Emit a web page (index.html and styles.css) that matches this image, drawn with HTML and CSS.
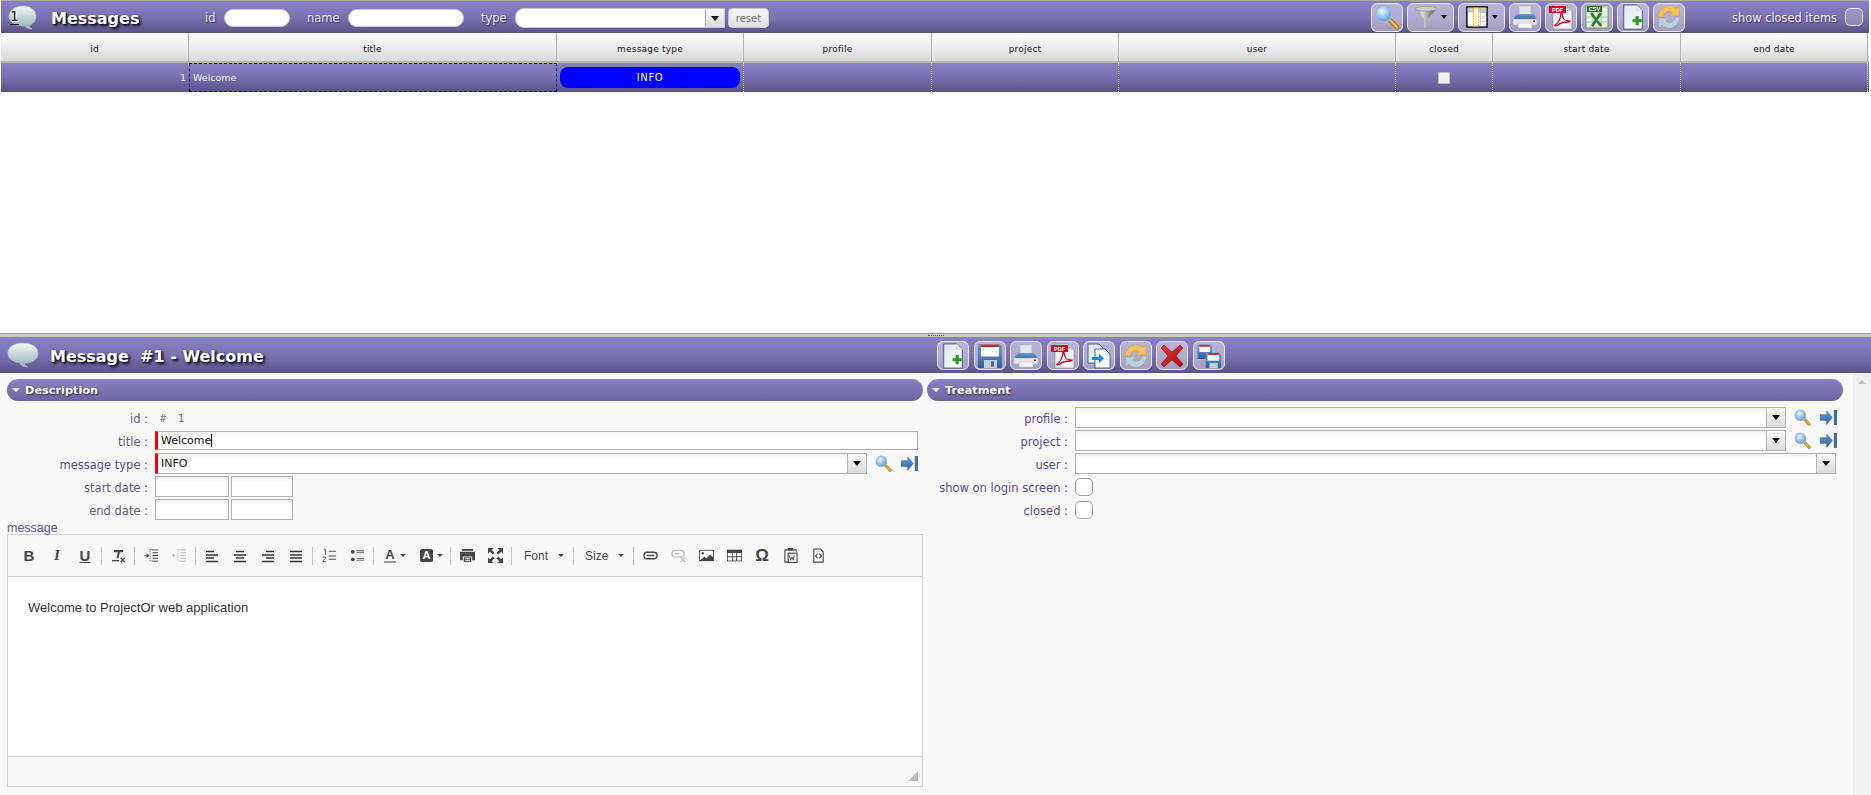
FILE: index.html
```html
<!DOCTYPE html>
<html lang="en">
<head>
    <meta charset="UTF-8">
    <title>Messages</title>
    <link rel="stylesheet" href="styles.css">
</head>
<body>
    <svg class="sprite" width="0" height="0">
        <defs>
            <linearGradient id="g-bubble" x1="0" y1="0" x2="0" y2="1"><stop offset="0" stop-color="#f4f8f8"/><stop offset="1" stop-color="#8fb0b4"/></linearGradient>
            <radialGradient id="g-lens" cx=".4" cy=".35" r=".7"><stop offset="0" stop-color="#eef7ff"/><stop offset="1" stop-color="#4b93e0"/></radialGradient>
            <linearGradient id="g-funnel" x1="0" y1="0" x2="1" y2="0"><stop offset="0" stop-color="#8c8c8c"/><stop offset=".35" stop-color="#d8d8d8"/><stop offset=".7" stop-color="#8a8a8a"/><stop offset="1" stop-color="#6f6f6f"/></linearGradient>
            <linearGradient id="g-page" x1="0" y1="0" x2="1" y2="1"><stop offset="0" stop-color="#dbe4f4"/><stop offset="1" stop-color="#ffffff"/></linearGradient>
            <linearGradient id="g-blue" x1="0" y1="0" x2="0" y2="1"><stop offset="0" stop-color="#6d9bd0"/><stop offset="1" stop-color="#2f5f9c"/></linearGradient>
            <linearGradient id="g-red" x1="0" y1="0" x2="1" y2="1"><stop offset="0" stop-color="#e23b3b"/><stop offset="1" stop-color="#a50f0f"/></linearGradient>

            <symbol id="i-bubble" viewBox="0 0 32 27">
                <path d="M16 1c8.500 0 15 3.700 15 10s-6 10-12 10c-1 0-1.500 0-2.300 0 .8 1.800 2.600 3.200 4.300 4-3.500 0-7-1.300-8.500-4.300C6.200 20 1 16.500 1 11 1 4.700 7.500 1 16 1z" fill="url(#g-bubble)" stroke="#b8cdd0" stroke-width=".6"/>
            </symbol>
            <symbol id="i-round-bubble" viewBox="0 0 29 25">
                <path d="M15 1c7 0 13 4 13 10 0 5-3.500 8.500-7 9.500.5 1.500 1.500 2.500 3 3.500-3 0-6-1-7.500-3C7 21 1 17 1 11 1 5 8 1 15 1z" fill="url(#g-bubble)" stroke="#b8cdd0" stroke-width=".6"/>
            </symbol>
            <symbol id="i-search" viewBox="0 0 24 24">
                <path d="M14.500 14.500l7 7" stroke="#a06a18" stroke-width="4" stroke-linecap="round"/>
                <path d="M14.500 14.500l7 7" stroke="#f0b040" stroke-width="2.400" stroke-linecap="round"/>
                <circle cx="9" cy="9" r="7.500" fill="url(#g-lens)" stroke="#9cb8d8" stroke-width="1.500"/>
            </symbol>
            <symbol id="i-funnel" viewBox="0 0 24 24">
                <path d="M0 3L10 14V24l4-2V14L24 3z" fill="url(#g-funnel)"/>
                <ellipse cx="12" cy="3" rx="12" ry="2.500" fill="#cfcfcf" stroke="#8a8a8a" stroke-width=".6"/>
            </symbol>
            <symbol id="i-columns" viewBox="0 0 24 24">
                <rect x="1" y="1" width="22" height="22" fill="#fff" stroke="#000" stroke-width="1.500"/>
                <rect x="2" y="2" width="20" height="5" fill="#c9c9c9"/>
                <path d="M16 2v20M16 7h6M16 12h6M16 17h6" stroke="#b0b0b0" stroke-width=".8"/>
                <rect x="8" y="2" width="6" height="20" fill="#fff4c8" stroke="#e09a10" stroke-width="1" stroke-dasharray="2 1"/>
            </symbol>
            <symbol id="i-print" viewBox="0 0 26 24">
                <rect x="7" y="1" width="12" height="9" fill="#dfe6ee" stroke="#a8b4c0" stroke-width=".6"/>
                <path d="M2 15c0-3 2-6 5-6h12c3 0 5 3 5 6z" fill="url(#g-blue)"/>
                <rect x="1" y="14" width="24" height="6" rx="1" fill="#e4e8ec" stroke="#a8b0b8" stroke-width=".6"/>
                <rect x="6" y="18" width="14" height="5" fill="#f8f9fb" stroke="#b0b8c0" stroke-width=".6"/>
                <rect x="21" y="15.500" width="2" height="1.500" fill="#c83030"/>
            </symbol>
            <symbol id="i-pdf" viewBox="0 0 26 26">
                <path d="M5 1h13l6 6v18H5z" fill="#f4f4f4" stroke="#8a8a8a" stroke-width=".7"/>
                <path d="M18 1v6h6z" fill="#cfcfcf"/>
                <rect x="1" y="2" width="17" height="7" fill="#c8102e"/>
                <text x="9.500" y="8" class="svg-tag">PDF</text>
                <path d="M7 21c3-1 6-7 6-12 0-1.500 1 -1 1 0 0 5 3 8 7 8 1.500 0 1.500 1 0 1-4 0-9 1-11 3-1.500 1.500-4 1-3 0z" fill="none" stroke="#c8102e" stroke-width="1.300"/>
            </symbol>
            <symbol id="i-csv" viewBox="0 0 26 26">
                <rect x="2" y="2" width="22" height="22" fill="#e8f2e0" stroke="#5f8a55" stroke-width=".8"/>
                <rect x="3" y="2" width="15" height="6" fill="#2f6e2f"/>
                <text x="10.500" y="7.200" class="svg-tag">CSV</text>
                <path d="M3 13h20M3 18h20M9 8v16M17 8v16" stroke="#8cb47e" stroke-width=".7"/>
                <path d="M7 9l10 13M17 9L8 22" stroke="#2f7d32" stroke-width="2.600"/>
            </symbol>
            <symbol id="i-new" viewBox="0 0 24 28">
                <path d="M2 1h14l6 6v20H2z" fill="url(#g-page)" stroke="#20355a" stroke-width=".8"/>
                <path d="M16 1v6h6z" fill="#eef2f8" stroke="#b8c4d8" stroke-width=".5"/>
                <path d="M16.500 13v10M11.500 18h10" stroke="#2c9a1e" stroke-width="3.400"/>
            </symbol>
            <symbol id="i-refresh" viewBox="0 0 28 28">
                <path d="M2 14C3 6 9 2 14 2c3 0 5.500 1 7.500 3L25 2v11H14l3.500-3.500C16.500 8.500 15 8 14 8c-3 0-6 2.500-6.500 6z" fill="#f2c25c" stroke="#d4993a" stroke-width=".6"/>
                <path d="M26 14c-1 8-7 12-12 12-3 0-5.500-1-7.500-3L3 26V15h11l-3.500 3.500c1 1 2.500 1.500 3.500 1.500 3 0 6-2.500 6.500-6z" fill="#bccfdb" stroke="#8da6b5" stroke-width=".6"/>
            </symbol>
            <symbol id="i-save" viewBox="0 0 26 26">
                <path d="M1 1h22l2 2v22H1z" fill="url(#g-blue)"/>
                <rect x="4" y="1.500" width="18" height="12" fill="#fff"/>
                <rect x="4" y="1.500" width="18" height="2.500" fill="#d02020"/>
                <rect x="7" y="17" width="13" height="8" fill="#c4cfdb"/>
                <rect x="14" y="18.500" width="3" height="5" fill="#48658a"/>
            </symbol>
            <symbol id="i-copy" viewBox="0 0 26 26">
                <path d="M2 1h11l4 4v15H2z" fill="url(#g-page)" stroke="#2c4a78" stroke-width=".8"/>
                <path d="M9 6h10l5 5v14H9z" fill="#f6f9fd" stroke="#2c4a78" stroke-width=".8"/>
                <path d="M6 14h7v-3l5 4.500-5 4.500v-3H6z" fill="#1f86d8"/>
            </symbol>
            <symbol id="i-delete" viewBox="0 0 26 26">
                <path d="M2 5l3-3 8 7 8-7 3 3-7 8 7 8-3 3-8-7-8 7-3-3 7-8z" fill="url(#g-red)" stroke="#8d1010" stroke-width=".5"/>
            </symbol>
            <symbol id="i-multi" viewBox="0 0 26 26">
                <g transform="translate(1 1) scale(.6)"><path d="M1 1h22l2 2v22H1z" fill="url(#g-blue)"/><rect x="4" y="1.500" width="18" height="12" fill="#fff"/><rect x="4" y="1.500" width="18" height="3" fill="#d02020"/></g>
                <g transform="translate(9 9) scale(.64)"><path d="M1 1h22l2 2v22H1z" fill="url(#g-blue)"/><rect x="4" y="1.500" width="18" height="12" fill="#fff"/><rect x="4" y="1.500" width="18" height="3" fill="#d02020"/><rect x="7" y="17" width="13" height="8" fill="#c4cfdb"/></g>
            </symbol>
            <symbol id="i-goto" viewBox="0 0 16 14">
                <path d="M0 4h6V0l6 7-6 7v-4H0z" fill="url(#g-blue)"/>
                <rect x="13" y="0" width="3" height="14" fill="#3d6ea8"/>
            </symbol>

            <symbol id="t-clear" viewBox="0 0 16 16"><path d="M3 2h10v2.500H9.500L8 11H5.800L7.300 4.500H3z" fill="#474747"/><path d="M1 13.500h8" stroke="#474747" stroke-width="1.500"/><path d="M10.500 10.500l4 4.500M14.500 10.500l-4 4.500" stroke="#474747" stroke-width="1.500"/></symbol>
            <symbol id="t-indent" viewBox="0 0 16 16"><path d="M8 2h7M9 5h6M9 8h6M9 11h6M8 14h7" stroke="#474747"/><path d="M6.500 1v14" stroke="#474747" stroke-dasharray="1 1"/><path d="M0 8h3V6l2.500 2L3 10V8" fill="#474747" stroke="#474747" stroke-width=".6"/></symbol>
            <symbol id="t-outdent" viewBox="0 0 16 16"><path d="M8 2h7M9 5h6M9 8h6M9 11h6M8 14h7" stroke="#bdbdbd"/><path d="M6.500 1v14" stroke="#bdbdbd" stroke-dasharray="1 1"/><path d="M5 8H2V6L0 8l2 2V8" fill="#bdbdbd" stroke="#bdbdbd" stroke-width=".6"/></symbol>
            <symbol id="t-left" viewBox="0 0 14 14"><path d="M1 2.500h8M1 6h12M1 9h8M1 12.500h12" stroke="#333" stroke-width="1.700"/></symbol>
            <symbol id="t-center" viewBox="0 0 14 14"><path d="M3 2.500h8M1 6h12M3 9h8M1 12.500h12" stroke="#333" stroke-width="1.700"/></symbol>
            <symbol id="t-right" viewBox="0 0 14 14"><path d="M5 2.500h8M1 6h12M5 9h8M1 12.500h12" stroke="#333" stroke-width="1.700"/></symbol>
            <symbol id="t-justify" viewBox="0 0 14 14"><path d="M1 2.500h12M1 6h12M1 9h12M1 12.500h12" stroke="#333" stroke-width="1.700"/></symbol>
            <symbol id="t-ol" viewBox="0 0 16 16"><path d="M7 3.500h8M7 8.500h8M7 12h8" stroke="#474747"/><path d="M2 1.500h1.500V7M1 14.500c0-2 3-2.500 3-4 0-1.500-2.500-1.500-3 0M1 14.500h3.200" fill="none" stroke="#474747"/></symbol>
            <symbol id="t-ul" viewBox="0 0 16 16"><circle cx="3" cy="4" r="2" fill="#474747"/><circle cx="3" cy="12" r="2" fill="#474747"/><path d="M7 3h8M7 5h8M7 11h8M7 13h8" stroke="#474747" stroke-width=".9"/></symbol>
            <symbol id="t-print" viewBox="0 0 16 16"><path d="M2 1h12v2H2z" fill="#474747"/><path d="M0 4h16v9h-3V9H3v4H0z" fill="#474747"/><path d="M4 10h8v5H4z" fill="#474747"/><path d="M5.500 11.500h5M5.500 13.500h5" stroke="#f8f8f8"/></symbol>
            <symbol id="t-max" viewBox="0 0 16 16"><path d="M0 0h6L4 2l3 3-2 2-3-3-2 2zM16 0v6l-2-2-3 3-2-2 3-3-2-2zM0 16v-6l2 2 3-3 2 2-3 3 2 2zM16 16h-6l2-2-3-3 2-2 3 3 2-2z" fill="#474747"/></symbol>
            <symbol id="t-link" viewBox="0 0 16 16"><rect x="1" y="4.500" width="14" height="7" rx="3.500" fill="none" stroke="#474747" stroke-width="1.500"/><path d="M4 8h8" stroke="#474747" stroke-width="1.500"/></symbol>
            <symbol id="t-unlink" viewBox="0 0 16 16"><rect x="1" y="2.500" width="13" height="7" rx="3.500" fill="none" stroke="#c4c4c4" stroke-width="1.500"/><path d="M4 6h5" stroke="#c4c4c4" stroke-width="1.500"/><path d="M10 10l5 5M15 10l-5 5" stroke="#c4c4c4" stroke-width="1.500"/></symbol>
            <symbol id="t-image" viewBox="0 0 16 16"><path d="M0 2h16v12H0z" fill="#474747"/><path d="M1 3h14v7l-3-3-4 4-2-2-5 4z" fill="#fff"/><circle cx="4" cy="5.500" r="1.300" fill="#474747"/></symbol>
            <symbol id="t-table" viewBox="0 0 18 16"><path d="M0 1h18v14H0z" fill="#474747"/><path d="M1 5h5v4H1zM7 5h4v4H7zM12 5h5v4h-5zM1 10h5v4H1zM7 10h4v4H7zM12 10h5v4h-5z" fill="#fff"/></symbol>
            <symbol id="t-paste" viewBox="0 0 16 16"><path d="M5 2H2v13h3M11 2h3v2" fill="none" stroke="#474747" stroke-width="1.200"/><rect x="5" y="0" width="6" height="3" fill="#474747"/><rect x="5.500" y="5.500" width="9.500" height="10" fill="none" stroke="#474747" stroke-width="1.200"/><path d="M7 8l1 5 1.500-3 1.500 3 1-5" fill="none" stroke="#474747"/></symbol>
            <symbol id="t-source" viewBox="0 0 16 16"><path d="M3 1h7l3 3v11H3z" fill="none" stroke="#474747" stroke-width="1.200"/><path d="M7 6L5 8.500 7 11M9 6l2 2.500L9 11" fill="none" stroke="#474747" stroke-width="1.200"/></symbol>
        </defs>
    </svg>

    <section class="list-panel">
        <header class="title-bar list-bar">
            <span class="bubble-wrap">
                <svg class="round-bubble"><use href="#i-round-bubble"/></svg>
                <span class="bubble-count">1</span>
            </span>
            <h1 class="page-title list-title">Messages</h1>
            <label class="filter-label filter-id">id</label>
            <span class="round-input w-id"></span>
            <label class="filter-label filter-name">name</label>
            <span class="round-input w-name"></span>
            <label class="filter-label filter-type">type</label>
            <span class="round-select"><span class="drop-btn"><i class="caret"></i></span></span>
            <button class="reset-btn">reset</button>
            <div class="list-tools">
                <button class="tool-btn"><svg><use href="#i-search"/></svg></button>
                <button class="tool-btn wide"><svg><use href="#i-funnel"/></svg><i class="caret"></i></button>
                <button class="tool-btn wide"><svg><use href="#i-columns"/></svg><i class="caret"></i></button>
                <button class="tool-btn"><svg><use href="#i-print"/></svg></button>
                <button class="tool-btn"><svg><use href="#i-pdf"/></svg></button>
                <button class="tool-btn"><svg><use href="#i-csv"/></svg></button>
                <button class="tool-btn"><svg><use href="#i-new"/></svg></button>
                <button class="tool-btn"><svg><use href="#i-refresh"/></svg></button>
            </div>
            <span class="show-closed">show closed items</span>
            <span class="check-box on-bar"></span>
        </header>

        <div class="grid-row grid-head">
            <div>id</div><div>title</div><div>message type</div><div>profile</div><div>project</div><div>user</div><div>closed</div><div>start date</div><div>end date</div>
        </div>
        <div class="grid-row grid-item">
            <div class="cell-id">1</div>
            <div class="cell-title">Welcome</div>
            <div class="cell-pill"><span class="pill">INFO</span></div>
            <div></div><div></div><div></div>
            <div class="cell-check"><span class="mini-check"></span></div>
            <div></div><div></div>
        </div>
    </section>

    <div class="splitter"><span class="grip"></span></div>

    <section class="detail-panel">
        <header class="title-bar detail-bar">
            <svg class="bubble-icon detail-bubble"><use href="#i-bubble"/></svg>
            <h2 class="page-title">Message&nbsp; #1 - Welcome</h2>
            <div class="detail-tools">
                <button class="tool-btn"><svg><use href="#i-new"/></svg></button>
                <button class="tool-btn"><svg><use href="#i-save"/></svg></button>
                <button class="tool-btn"><svg><use href="#i-print"/></svg></button>
                <button class="tool-btn"><svg><use href="#i-pdf"/></svg></button>
                <button class="tool-btn"><svg><use href="#i-copy"/></svg></button>
                <button class="tool-btn"><svg><use href="#i-refresh"/></svg></button>
                <button class="tool-btn"><svg><use href="#i-delete"/></svg></button>
                <button class="tool-btn"><svg><use href="#i-multi"/></svg></button>
            </div>
        </header>

        <div class="detail-body">
            <div class="form-area">
                <div class="form-col left-col">
                    <div class="section-bar"><i class="section-arrow"></i>Description</div>
                    <div class="form-rows">
                        <div class="form-row"><span class="field-label">id :</span><span class="id-value"><span class="hash">#</span>&nbsp; 1</span></div>
                        <div class="form-row"><span class="field-label">title :</span><span class="text-input required title-input">Welcome<i class="text-cursor"></i></span></div>
                        <div class="form-row"><span class="field-label link-label">message type :</span><span class="text-input required select-input type-select">INFO<span class="drop-btn"><i class="caret"></i></span></span>
                            <svg class="row-icon search-icon"><use href="#i-search"/></svg><svg class="row-icon goto-icon"><use href="#i-goto"/></svg></div>
                        <div class="form-row"><span class="field-label">start date :</span><span class="text-input date-input"></span><span class="text-input time-input"></span></div>
                        <div class="form-row"><span class="field-label">end date :</span><span class="text-input date-input"></span><span class="text-input time-input"></span></div>
                    </div>
                    <div class="message-label">message</div>
                    <div class="editor">
                        <div class="editor-toolbar">
                            <span class="tb-btn tb-bold">B</span>
                            <span class="tb-btn tb-italic">I</span>
                            <span class="tb-btn tb-under">U</span>
                            <i class="tb-sep"></i>
                            <span class="tb-btn"><svg><use href="#t-clear"/></svg></span>
                            <i class="tb-sep"></i>
                            <span class="tb-btn"><svg><use href="#t-indent"/></svg></span>
                            <span class="tb-btn"><svg><use href="#t-outdent"/></svg></span>
                            <i class="tb-sep"></i>
                            <span class="tb-btn"><svg class="tb-align"><use href="#t-left"/></svg></span>
                            <span class="tb-btn"><svg class="tb-align"><use href="#t-center"/></svg></span>
                            <span class="tb-btn"><svg class="tb-align"><use href="#t-right"/></svg></span>
                            <span class="tb-btn"><svg class="tb-align"><use href="#t-justify"/></svg></span>
                            <i class="tb-sep"></i>
                            <span class="tb-btn"><svg><use href="#t-ol"/></svg></span>
                            <span class="tb-btn"><svg><use href="#t-ul"/></svg></span>
                            <i class="tb-sep"></i>
                            <span class="tb-color"><span class="color-a">A</span><i class="tb-caret"></i></span>
                            <span class="tb-color"><span class="color-bg">A</span><i class="tb-caret"></i></span>
                            <i class="tb-sep"></i>
                            <span class="tb-btn"><svg><use href="#t-print"/></svg></span>
                            <span class="tb-btn"><svg><use href="#t-max"/></svg></span>
                            <i class="tb-sep"></i>
                            <span class="tb-combo font-combo">Font<i class="tb-caret"></i></span>
                            <i class="tb-sep"></i>
                            <span class="tb-combo size-combo">Size<i class="tb-caret"></i></span>
                            <i class="tb-sep"></i>
                            <span class="tb-btn"><svg><use href="#t-link"/></svg></span>
                            <span class="tb-btn"><svg><use href="#t-unlink"/></svg></span>
                            <span class="tb-btn"><svg><use href="#t-image"/></svg></span>
                            <span class="tb-btn"><svg><use href="#t-table"/></svg></span>
                            <span class="tb-btn tb-omega">Ω</span>
                            <span class="tb-btn"><svg><use href="#t-paste"/></svg></span>
                            <span class="tb-btn"><svg><use href="#t-source"/></svg></span>
                        </div>
                        <div class="editor-content">Welcome to ProjectOr web application</div>
                        <div class="editor-foot"><i class="resize-grip"></i></div>
                    </div>
                </div>

                <div class="form-col right-col">
                    <div class="section-bar"><i class="section-arrow"></i>Treatment</div>
                    <div class="form-rows">
                        <div class="form-row"><span class="field-label link-label">profile :</span><span class="text-input select-input link-select"><span class="drop-btn"><i class="caret"></i></span></span>
                            <svg class="row-icon search-icon"><use href="#i-search"/></svg><svg class="row-icon goto-icon"><use href="#i-goto"/></svg></div>
                        <div class="form-row"><span class="field-label link-label">project :</span><span class="text-input select-input link-select"><span class="drop-btn"><i class="caret"></i></span></span>
                            <svg class="row-icon search-icon"><use href="#i-search"/></svg><svg class="row-icon goto-icon"><use href="#i-goto"/></svg></div>
                        <div class="form-row"><span class="field-label link-label">user :</span><span class="text-input select-input user-select"><span class="drop-btn"><i class="caret"></i></span></span></div>
                        <div class="form-row"><span class="field-label link-label">show on login screen :</span><span class="check-box"></span></div>
                        <div class="form-row"><span class="field-label link-label">closed :</span><span class="check-box"></span></div>
                    </div>
                </div>
            </div>
            <div class="scroll-track"><i class="scroll-up"></i></div>
        </div>
    </section>
</body>
</html>
```

FILE: styles.css
```css
/* page */
html, body { height: 100%; }
body { margin: 0; height: 795px; overflow: hidden; display: flex; flex-direction: column; background: #fff; font-family: "DejaVu Sans", Verdana, sans-serif; font-size: 10px; color: #333; }
.sprite { position: absolute; }
button { padding: 0; font-family: inherit; }
h1, h2 { margin: 0; font-weight: bold; }

/* title bars */
.title-bar { display: flex; align-items: center; background: linear-gradient(#8a80c6, #7870b0 55%, #5a5385); color: #fff; }
.page-title { font-size: 16px; color: #fff; text-shadow: 2px 2px 3px #0e0c22, 1px 1px 2px #1d1a38; white-space: nowrap; margin-top: 2px; }
.bubble-icon { width: 32px; height: 27px; }

.list-panel { height: 333px; flex: none; padding: 0 2px 0 1px; box-sizing: border-box; background: #fff; }
.list-bar { height: 32px; border-top: 1px solid #a9a9a9; }
.bubble-wrap { position: relative; margin: 1px 0 0 7px; width: 29px; height: 25px; flex: none; }
.round-bubble { display: block; width: 29px; height: 25px; }
.bubble-count { position: absolute; left: 2px; top: 3px; font-size: 14px; line-height: 16px; color: #222; text-shadow: 1px 1px 0 #fff; border-bottom: 1px solid #222; }
.list-title { margin-left: 14px; margin-top: 3px; width: 147px; flex: none; }
.filter-label { margin-top: 2px; font-size: 11.5px; color: #e6e4f2; text-shadow: 1px 1px 1px #3d3868; }
.filter-id { width: 19px; margin-left: 7px; }
.filter-name { width: 41px; margin-left: 17px; }
.filter-type { width: 34px; margin-left: 17px; }
.round-input { display: block; margin-top: 2px; height: 16px; background: #fff; border: 1px solid #c9c7d8; border-radius: 9px; box-sizing: content-box; }
.w-id { width: 64px; }
.w-name { width: 114px; }
.round-select { display: flex; justify-content: flex-end; margin-top: 2px; width: 208px; height: 18px; background: #fff; border: 1px solid #c9c7d8; border-radius: 9px 0 0 9px; overflow: hidden; }
.drop-btn { display: flex; align-items: center; justify-content: center; width: 19px; background: linear-gradient(#fafafa, #dadada); border-left: 1px solid #b5b5b5; box-sizing: border-box; }
.caret { display: inline-block; width: 0; height: 0; border-left: 4px solid transparent; border-right: 4px solid transparent; border-top: 5px solid #000; }
.reset-btn { margin: 2px 0 0 3px; width: 41px; height: 20px; border: 1px solid #c9c7d8; border-radius: 4px; background: linear-gradient(#f6f6f6, #dedede); color: #777; font-size: 10px; }

/* toolbar buttons */
.tool-btn { display: flex; align-items: center; justify-content: center; gap: 4px; width: 32px; height: 29px; box-sizing: border-box; border: 1px solid #e8e6f2; border-radius: 6px; background: rgba(255, 255, 255, 0.42); }
.tool-btn svg { width: 26px; height: 26px; flex: none; }
.tool-btn.wide { width: 47px; }
.tool-btn.wide svg { width: 22px; height: 22px; }
.tool-btn .caret { border-left-width: 3.5px; border-right-width: 3.5px; border-top-width: 4px; }
.list-tools { display: flex; gap: 4px; margin-left: auto; }
.show-closed { margin-left: 47px; margin-top: 1px; font-size: 11.4px; color: #f0eef8; text-shadow: 1px 1px 1px #3d3868; white-space: nowrap; }
.check-box { display: block; width: 16px; height: 16px; flex: none; border: 1px solid #9a9a9a; border-radius: 5px; background: #fff; }
.check-box.on-bar { margin: 0 6px 0 8px; background: rgba(255, 255, 255, 0.22); border-color: #e8e6f2; }

/* grid */
.grid-row { display: grid; grid-template-columns: 188px 368px 187px 188px 187px 277px 97px 188px 187px; }
.grid-head { height: 30px; box-sizing: border-box; background: linear-gradient(#fff, #d9d9d9); border-bottom: 2px solid #b4b4b4; color: #222; font-size: 9px; text-align: center; line-height: 33px; letter-spacing: .2px; }
.grid-head > div { border-right: 1px solid #b4b4b4; }
.grid-item { height: 29px; background: linear-gradient(#8a80c6, #7870b0 50%, #5a5385); color: #f0eef8; font-size: 9.5px; line-height: 29px; }
.grid-item > div { border-right: 1px dotted #e6e4d8; box-sizing: border-box; }
.grid-item > .cell-id { text-align: right; padding-right: 3px; border-right: 0; }
.grid-item > .cell-title { padding-left: 4px; outline: 1px dashed #000a78; outline-offset: -1px; border-right: 0; }
.cell-pill { display: flex; align-items: center; justify-content: center; }
.pill { display: block; width: 180px; height: 21px; background: #0000ff; border-radius: 8px; color: #fff; font-size: 10px; letter-spacing: .6px; line-height: 21px; text-align: center; }
.cell-check { display: flex; align-items: center; justify-content: center; }
.mini-check { display: block; width: 10px; height: 10px; background: #f0f0f0; border: 1px solid #bbb; }

/* splitter */
.splitter { flex: none; background: #c8c8c8; border-top: 1px solid #9c9c9c; display: flex; justify-content: center; height: 3px; }
.grip { width: 16px; height: 1px; margin-top: 1px; border-top: 1px dotted #555; }

/* detail */
.detail-panel { flex: 1; display: flex; flex-direction: column; min-height: 0; background: #f9f9f9; }
.detail-bar { height: 36px; flex: none; position: relative; }
.detail-bubble { margin-left: 7px; flex: none; }
.detail-bar .page-title { margin-left: 11px; }
.detail-tools { position: absolute; left: 937px; top: 4px; display: flex; gap: 4.5px; }
.detail-body { flex: 1; display: flex; min-height: 0; }
.form-area { flex: 1; display: flex; padding: 6px 10px 0 7px; gap: 4px; min-width: 0; }
.form-col { flex: none; }
.left-col { width: 916px; }
.right-col { width: 916px; }
.section-bar { display: flex; align-items: center; height: 22px; border-radius: 11px; background: linear-gradient(#8a80c6, #6d659f); color: #fff; font-size: 11.3px; font-weight: bold; text-shadow: 1px 1px 2px #2c2850; }
.section-arrow { width: 0; height: 0; margin: 0 5px 0 5px; border-left: 4px solid transparent; border-right: 4px solid transparent; border-top: 4px solid #fff; }
.form-rows { display: flex; flex-direction: column; gap: 2px; margin-top: 6px; }
.form-row { display: flex; align-items: center; height: 21px; }
.field-label { flex: none; width: 141px; margin-right: 7px; padding-top: 2px; text-align: right; font-size: 11.5px; color: #5c5c7a; white-space: nowrap; }
.link-label { color: #5b4a96; }
.id-value { margin-left: 5px; padding-top: 2px; font-family: "DejaVu Sans Mono", monospace; font-size: 10px; color: #666; }
.hash { color: #888; }
.text-input { display: flex; align-items: center; height: 19px; box-sizing: border-box; flex: none; background: linear-gradient(#f2f2f2, #fff 30%); border: 1px solid #b0b0b0; padding-left: 4px; font-size: 11px; color: #111; }
.required { border-left: 3px solid #f00; padding-left: 3px; }
.title-input { width: 763px; }
.text-cursor { width: 1px; height: 13px; background: #000; }
.select-input { height: 21px; padding-right: 0; }
.select-input .drop-btn { margin-left: auto; height: 100%; }
.type-select { width: 712px; }
.link-select { width: 711px; }
.user-select { width: 761px; }
.date-input { width: 74px; height: 21px; padding: 0; }
.time-input { width: 62px; height: 21px; margin-left: 2px; padding: 0; }
.row-icon { flex: none; }
.search-icon { width: 17px; height: 17px; margin-left: 8px; }
.goto-icon { width: 17px; height: 15px; margin-left: 9px; }
.message-label { margin-top: 1px; height: 13px; font-family: "Liberation Sans", Arial, sans-serif; font-size: 12.5px; line-height: 15px; color: #5f5596; }

/* editor */
.editor { display: flex; flex-direction: column; height: 253px; box-sizing: border-box; border: 1px solid #d1d1d1; background: #fff; }
.editor-toolbar { display: flex; align-items: center; height: 42px; flex: none; box-sizing: border-box; padding-left: 7px; background: #f8f8f8; border-bottom: 1px solid #d1d1d1; color: #474747; }
.tb-btn { display: flex; align-items: center; justify-content: center; width: 28px; height: 24px; flex: none; font-family: "Liberation Sans", Arial, sans-serif; font-size: 15px; }
.tb-btn svg { width: 15px; height: 15px; }
.tb-btn svg.tb-align { width: 14px; height: 14px; }
.tb-bold { font-weight: bold; }
.tb-italic { font-weight: bold; font-style: italic; font-family: "Liberation Serif", serif; }
.tb-under { font-weight: bold; text-decoration: underline; }
.tb-omega { font-size: 17px; font-weight: bold; }
.tb-sep { display: block; flex: none; width: 1px; height: 18px; margin: 0 2px; background: #c8c8c8; }
.tb-color { display: flex; align-items: center; gap: 4px; width: 36px; height: 24px; box-sizing: border-box; padding-left: 8px; flex: none; font-family: "Liberation Sans", Arial, sans-serif; font-weight: bold; font-size: 13px; }
.color-a { border-bottom: 2px solid #999; line-height: 13px; width: 12px; text-align: center; }
.color-bg { width: 13px; height: 13px; border-radius: 2px; background: #474747; color: #fff; line-height: 13px; text-align: center; font-size: 11px; }
.tb-caret { display: inline-block; width: 0; height: 0; border-left: 3px solid transparent; border-right: 3px solid transparent; border-top: 3px solid #474747; }
.tb-combo { display: flex; align-items: center; flex: none; height: 24px; box-sizing: border-box; font-family: "Liberation Sans", Arial, sans-serif; font-size: 12px; color: #484848; justify-content: space-between; }
.font-combo { width: 57px; padding: 0 7px 0 10px; }
.size-combo { width: 55px; padding: 0 7px 0 9px; }
.editor-content { flex: 1; padding: 22px 20px; font-family: "Liberation Sans", Arial, sans-serif; font-size: 13px; line-height: 18px; color: #333; }
.editor-foot { position: relative; height: 29px; flex: none; background: #f8f8f8; border-top: 1px solid #d1d1d1; }
.resize-grip { position: absolute; right: 4px; bottom: 5px; width: 0; height: 0; border-left: 10px solid transparent; border-bottom: 10px solid #bdbdbd; }

/* scrollbar */
.scroll-track { width: 18px; flex: none; background: #f1f1f1; display: flex; justify-content: center; }
.scroll-up { width: 0; height: 0; margin-top: 7px; border-left: 4px solid transparent; border-right: 4px solid transparent; border-bottom: 4px solid #c0c0c0; }
.svg-tag { font-family: "Liberation Sans", Arial, sans-serif; font-size: 5.5px; font-weight: bold; fill: #fff; text-anchor: middle; }
```
